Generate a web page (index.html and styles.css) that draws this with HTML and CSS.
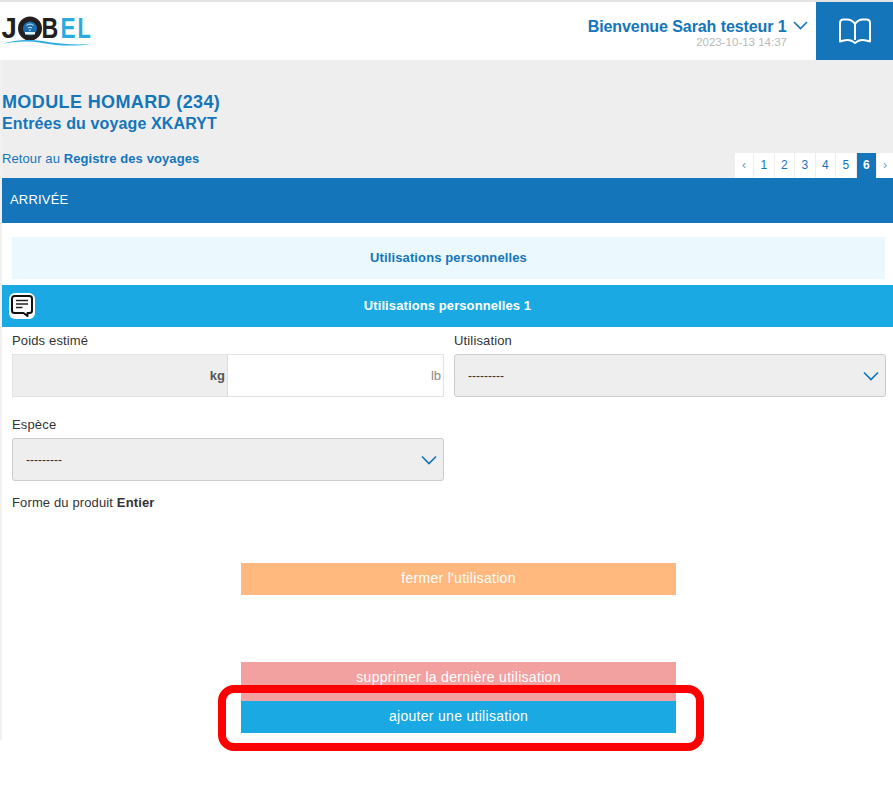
FILE: index.html

```html
<!DOCTYPE HTML>
<html>
<head>
<meta name="viewport" content="width=device-width, initial-scale=1">
<link rel="stylesheet" href="styles.css">
</head>
    <body>
        <div class="page">
            <div id="head">
                <svg class="logo" width="96" height="37" viewBox="0 0 96 37">
                    <text class="logo_dark" transform="translate(1.500 25) scale(0.95 1)">J</text>
                    <circle cx="30" cy="15.500" r="9.500" fill="#1c6fae" stroke="#231f20" stroke-width="5"></circle>
                    <path d="M25 19h10v2.500h-10z" fill="#dff1fa"></path>
                    <path d="M26.500 12.500a5 5 0 0 1 7 0M28 15a3 3 0 0 1 4 0" fill="none" stroke="#cfe9f7" stroke-width="1"></path>
                    <path d="M29 16.500h2l-1 2z" fill="#cfe9f7"></path>
                    <text class="logo_dark" transform="translate(41.500 25) scale(0.8 1)">B</text>
                    <text class="logo_blue" transform="translate(60.500 25) scale(0.78 1)">E</text>
                    <text class="logo_blue" transform="translate(77.500 25) scale(0.75 1)">L</text>
                    <path d="M2 31C14 27 28 26 42 28C58 31 76 32 91 31C76 33.500 58 33 42 30C28 27.500 14 28.500 2 31Z" fill="#29abe2"></path>
                </svg>
                <div class="welcome">
                    <div class="welcome_name">Bienvenue Sarah testeur 1
                        <svg class="name_chevron" width="15" height="9" viewBox="0 0 15 9"><path d="M1 1l6.500 6.500L14 1" fill="none" stroke="#1475bb" stroke-width="1.600"></path></svg>
                    </div>
                    <div class="welcome_date">2023-10-13 14:37</div>
                </div>
                <div class="book_tile">
                    <svg width="32" height="27" viewBox="0 0 32 27">
                        <path d="M16 6C14 3 11 1.500 8 1.500H4.500C2.500 1.500 1 3 1 5V23.500C6 21.500 10 21.500 13 23L16 25L19 23C22 21.500 26 21.500 31 23.500V5C31 3 29.500 1.500 27.500 1.500H24C21 1.500 18 3 16 6V22" fill="none" stroke="#fff" stroke-width="2" stroke-linejoin="round"></path>
                    </svg>
                </div>
            </div>

            <div id="title_zone">
                <h1>MODULE HOMARD (234)</h1>
                <h2>Entrées du voyage XKARYT</h2>
                <div class="title_bottom">
                    <p class="back_link">Retour au <b>Registre des voyages</b></p>
                    <div class="pagination">
                        <a class="page_arrow">‹</a><a>1</a><a>2</a><a>3</a><a>4</a><a>5</a><a class="active">6</a><a class="page_arrow last">›</a>
                    </div>
                </div>
            </div>

            <div id="arrival_bar">ARRIVÉE</div>

            <div class="section_box">Utilisations personnelles</div>

            <div class="use_bar">
                <span class="note_icon">
                    <svg width="26" height="26" viewBox="0 0 26 26">
                        <path d="M5.500 3H20.500A2.500 2.500 0 0 1 23 5.500V17.500A2.500 2.500 0 0 1 20.500 20H18.500V23L14.500 20H5.500A2.500 2.500 0 0 1 3 17.500V5.500A2.500 2.500 0 0 1 5.500 3Z" fill="#fff" stroke="#111" stroke-width="2" stroke-linejoin="round"></path>
                        <path d="M7 7.500H19M7 11H19M7 14.500H13.500" stroke="#222" stroke-width="1.500"></path>
                    </svg>
                </span>
                Utilisations personnelles 1
            </div>

            <div class="form_grid">
                <div class="field">
                    <label>Poids estimé</label>
                    <div class="weight_pair">
                        <div class="weight kg">kg</div>
                        <div class="weight lb">lb</div>
                    </div>
                </div>
                <div class="field">
                    <label>Utilisation</label>
                    <div class="select_box">---------
                        <svg width="16" height="10" viewBox="0 0 16 10"><path d="M1 1.500l7 7 7-7" fill="none" stroke="#1475bb" stroke-width="1.700"></path></svg>
                    </div>
                </div>
                <div class="field">
                    <label>Espèce</label>
                    <div class="select_box">---------
                        <svg width="16" height="10" viewBox="0 0 16 10"><path d="M1 1.500l7 7 7-7" fill="none" stroke="#1475bb" stroke-width="1.700"></path></svg>
                    </div>
                </div>
            </div>

            <p class="product_form">Forme du produit <b>Entier</b></p>

            <div class="actions">
                <div class="action orange">fermer l'utilisation</div>
                <div class="action pink">supprimer la dernière utilisation</div>
                <div class="action blue">ajouter une utilisation</div>
                <div class="highlight"></div>
            </div>
        </div>
    </body>
</html>
```

FILE: styles.css

```css
* {
    box-sizing: border-box;
}
html, body {
    background-color: #fff;
}
body {
    margin: 0;
    font-family: "Liberation Sans", Arial, sans-serif;
    font-size: 13px;
    color: #333;
}
/* Whole page */
.page {
    position: relative;
    border-top: 2px solid #e2e2e2;
    padding-left: 2px;
}
/* The thin grey strip down the left side, stops before the window bottom */
.page::before {
    content: '';
    position: absolute;
    left: 0;
    top: 0;
    width: 2px;
    height: 738px;
    background-color: #f1f1f1;
}
/* Top white header */
#head {
    position: relative;
    display: flex;
    align-items: stretch;
    height: 58px;
    margin-left: -2px;
    background-color: #fff;
}
.logo {
    margin-top: 11px;
}
.logo_dark, .logo_blue {
    font-family: "Liberation Sans", Arial, sans-serif;
    font-size: 29px;
    font-weight: bold;
}
.logo_dark {
    fill: #231f20;
}
.logo_blue {
    fill: #29abe2;
}
.welcome {
    margin-left: auto;
    padding: 16px 29px 0 0;
    text-align: right;
}
.welcome_name {
    color: #1475bb;
    font-size: 16px;
    font-weight: bold;
    line-height: 17px;
    letter-spacing: -0.08px;
    margin-right: -21px;
}
.name_chevron {
    margin-left: 2px;
    vertical-align: 2px;
}
.welcome_date {
    color: #b9b9b9;
    font-size: 11.500px;
    line-height: 14px;
}
.book_tile {
    display: flex;
    align-items: center;
    justify-content: center;
    width: 77px;
    background-color: #1475bb;
}
/* Grey title zone */
#title_zone {
    height: 118px;
    background-color: #eee;
    padding-top: 33px;
}
h1 {
    margin: 0;
    color: #1475bb;
    font-size: 18px;
    line-height: 19px;
    letter-spacing: 0.38px;
}
h2 {
    margin: 0;
    color: #1475bb;
    font-size: 16px;
    line-height: 23px;
    letter-spacing: 0.13px;
}
.title_bottom {
    display: flex;
    justify-content: space-between;
    margin-top: 16px;
}
.back_link {
    margin: 0;
    color: #1475bb;
    font-size: 13px;
    line-height: 16px;
    letter-spacing: 0.1px;
}
.pagination {
    display: flex;
    margin-top: 2px;
}
.pagination a {
    width: 20.500px;
    height: 25px;
    line-height: 25px;
    text-align: center;
    font-size: 12px;
    color: #1475bb;
    background-color: #fff;
    border-left: 1px solid #eee;
}
.pagination .page_arrow {
    width: 19px;
    color: #6a9cc4;
}
.pagination .active {
    background-color: #1475bb;
    color: #fff;
    font-weight: bold;
}
.pagination .last {
    width: 17px;
}
/* Blue bars */
#arrival_bar {
    height: 45px;
    line-height: 43px;
    padding-left: 8px;
    background-color: #1475bb;
    color: #fff;
    font-size: 13px;
    letter-spacing: 0.2px;
}
.section_box {
    margin: 14px 8px 0 10px;
    height: 42px;
    line-height: 41px;
    text-align: center;
    background-color: #ebf8fd;
    color: #1475bb;
    font-size: 13px;
    font-weight: bold;
    letter-spacing: 0.12px;
}
.use_bar {
    position: relative;
    margin-top: 6px;
    height: 42px;
    line-height: 42px;
    text-align: center;
    background-color: #1aa9e2;
    color: #fff;
    font-size: 13px;
    font-weight: bold;
    letter-spacing: 0.1px;
}
.note_icon {
    position: absolute;
    left: 7px;
    top: 8px;
    display: flex;
    width: 26px;
    height: 26px;
    background-color: #fff;
    border-radius: 6px;
}
/* Form */
.form_grid {
    display: grid;
    grid-template-columns: 432px 432px;
    column-gap: 10px;
    row-gap: 19px;
    padding: 5px 0 0 10px;
}
label {
    display: block;
    font-size: 13px;
    line-height: 18px;
    letter-spacing: 0.15px;
    margin-bottom: 4px;
}
.weight_pair {
    display: flex;
    height: 43px;
    border: 1px solid #e3e3e3;
}
.weight {
    flex: 1;
    line-height: 41px;
    text-align: right;
    padding-right: 2px;
}
.kg {
    background-color: #eee;
    border-right: 1px solid #ddd;
    color: #555;
    font-weight: bold;
    flex: 0 0 215px;
}
.lb {
    color: #888;
}
.select_box {
    display: flex;
    align-items: center;
    justify-content: space-between;
    height: 43px;
    padding: 0 6px 0 13px;
    background-color: #eee;
    border: 1px solid #ccc;
    border-radius: 3px;
    font-size: 12px;
}
.product_form {
    margin: 13px 0 0 10px;
    font-size: 13px;
    line-height: 18px;
    letter-spacing: 0.13px;
}
/* Buttons at the bottom */
.actions {
    position: relative;
    display: flex;
    flex-direction: column;
    padding: 51px 0 18px 239px;
}
.action {
    width: 435px;
    height: 32px;
    line-height: 30px;
    text-align: center;
    color: #fff;
    font-size: 14px;
    letter-spacing: 0.3px;
}
.orange {
    background-color: #ffb87e;
}
.pink {
    background-color: #f2a0a0;
    margin-top: 67px;
    height: 39px;
}
.blue {
    background-color: #1aa9e2;
}
/* Red frame drawn over the last button */
.highlight {
    position: absolute;
    left: 216px;
    top: 173px;
    width: 486px;
    height: 66px;
    border: 8px solid #f00;
    border-radius: 16px;
}
```
